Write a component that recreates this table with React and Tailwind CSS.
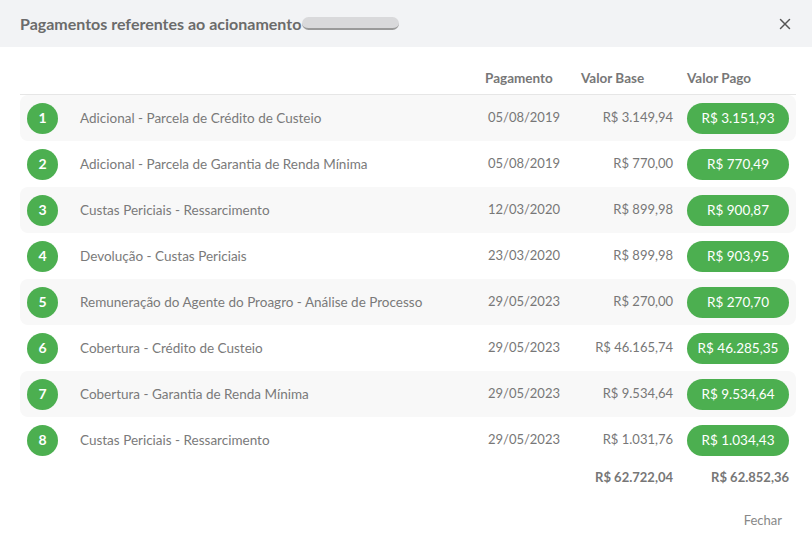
import React from 'react';
import { X } from 'lucide-react';

const pagamentos = [
    { descricao: 'Adicional - Parcela de Crédito de Custeio', data: '05/08/2019', base: 'R$ 3.149,94', pago: 'R$ 3.151,93' },
    { descricao: 'Adicional - Parcela de Garantia de Renda Mínima', data: '05/08/2019', base: 'R$ 770,00', pago: 'R$ 770,49' },
    { descricao: 'Custas Periciais - Ressarcimento', data: '12/03/2020', base: 'R$ 899,98', pago: 'R$ 900,87' },
    { descricao: 'Devolução - Custas Periciais', data: '23/03/2020', base: 'R$ 899,98', pago: 'R$ 903,95' },
    { descricao: 'Remuneração do Agente do Proagro - Análise de Processo', data: '29/05/2023', base: 'R$ 270,00', pago: 'R$ 270,70' },
    { descricao: 'Cobertura - Crédito de Custeio', data: '29/05/2023', base: 'R$ 46.165,74', pago: 'R$ 46.285,35' },
    { descricao: 'Cobertura - Garantia de Renda Mínima', data: '29/05/2023', base: 'R$ 9.534,64', pago: 'R$ 9.534,64' },
    { descricao: 'Custas Periciais - Ressarcimento', data: '29/05/2023', base: 'R$ 1.031,76', pago: 'R$ 1.034,43' },
];

export default function App() {
    return (
        <div className="w-[812px] h-[547px] bg-white text-[#777] font-['Lato',sans-serif] flex flex-col">

            {/* Cabeçalho */}
            <div className="h-[47px] bg-[#f2f3f5] flex items-center justify-between pl-5 pr-[18px] shrink-0">
                <h2 className="text-[16px] font-bold text-[#6b6b6b] flex items-center">
                    Pagamentos referentes ao acionamento
                    <span className="ml-px inline-block w-[97px] h-[13px] rounded-full bg-[#d9d9db] border-b-2 border-[#9a9a9a]"></span>
                </h2>
                <button className="text-[#555]">
                    <X size={18} strokeWidth={2} />
                </button>
            </div>

            {/* Tabela */}
            <div className="pl-5 pr-4 pt-[18px]">
                <div className="flex items-center h-[26px] border-b border-[#e6e6e6] text-[13.5px] font-bold text-[#777] pb-[3px] box-content">
                    <div className="flex-1"></div>
                    <div className="w-[97px] pl-[10px]">Pagamento</div>
                    <div className="w-[115px] pl-[9px]">Valor Base</div>
                    <div className="w-[109px]">Valor Pago</div>
                </div>

                {pagamentos.map((p, i) => (
                    <div
                        key={i}
                        className={`flex items-center h-[46px] rounded-lg text-[13px] ${i % 2 === 0 ? 'bg-[#f8f8f8]' : 'bg-white'}`}
                    >
                        <div className="w-[60px] flex pl-[7px]">
                            <span className="w-[31px] h-[31px] rounded-full bg-[#4caf50] text-white text-sm font-bold flex items-center justify-center">
                                {i + 1}
                            </span>
                        </div>
                        <div className="flex-1 text-[13.5px] text-[#7a7a7a]">{p.descricao}</div>
                        <div className="w-[97px] text-right pr-3">{p.data}</div>
                        <div className="w-[115px] text-right pr-[14px]">{p.base}</div>
                        <div className="w-[109px]">
                            <span className="w-[102px] h-[31px] rounded-full bg-[#4caf50] text-white text-[13.5px] flex items-center justify-center">
                                {p.pago}
                            </span>
                        </div>
                    </div>
                ))}

                {/* Totais */}
                <div className="flex items-center h-[30px] text-[13px] font-bold text-[#777]">
                    <div className="flex-1"></div>
                    <div className="w-[115px] text-right pr-[14px]">R$ 62.722,04</div>
                    <div className="w-[109px] text-right pr-[7px]">R$ 62.852,36</div>
                </div>
            </div>

            <div className="flex justify-end pr-[30px] pt-[18px]">
                <button className="text-[13px] text-[#888]">Fechar</button>
            </div>
        </div>
    );
}
